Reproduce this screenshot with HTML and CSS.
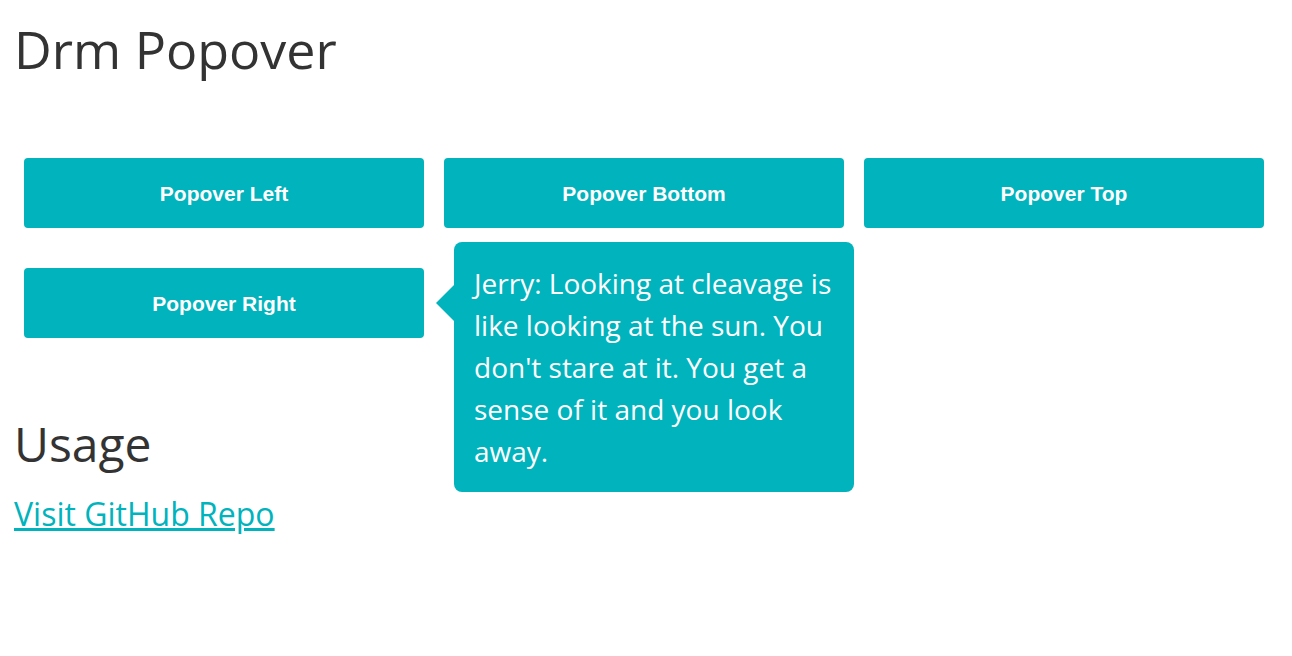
FILE: index.html
```html
<!DOCTYPE html>
<html>
<head>
  <meta charset="UTF-8">
  <title>Drm Popover</title>
  <link rel="stylesheet" href="styles.css">
</head>
<body>
  <div class="page">
    <h1 class="title">Drm Popover</h1>

    <div class="demo">
      <div class="cell">
        <button class="btn">Popover Left</button>
      </div>
      <div class="cell">
        <button class="btn">Popover Bottom</button>
      </div>
      <div class="cell">
        <button class="btn">Popover Top</button>
      </div>
      <div class="cell">
        <button class="btn">Popover Right</button>
        <div class="popover popover-right">
          Jerry: Looking at cleavage is like looking at the sun. You don't stare at it. You get a sense of it and you look away.
        </div>
      </div>
    </div>

    <h2 class="usage">Usage</h2>
    <a class="repo-link" href="#">Visit GitHub Repo</a>
  </div>
</body>
</html>
```

FILE: styles.css
```css
body {
  margin: 0;
  background: #fff;
  color: #333;
  font-family: 'Open Sans', 'Noto Sans', sans-serif;
}

.page {
  padding: 0 14px;
}

.title {
  font-size: 52px;
  font-weight: 400;
  line-height: 62px;
  margin: 18px 0 0 0;
}

.demo {
  display: grid;
  grid-template-columns: repeat(3, 400px);
  column-gap: 20px;
  row-gap: 40px;
  padding: 0 10px;
  margin-top: 78px;
}

.cell {
  position: relative;
}

.btn {
  display: block;
  width: 100%;
  height: 70px;
  padding: 2px 0 0;
  border: none;
  border-radius: 4px;
  background: #00b3bc;
  color: #fff;
  font-family: 'Liberation Sans', Arial, sans-serif;
  font-size: 21px;
  font-weight: 700;
  cursor: pointer;
}

.popover {
  position: absolute;
  left: calc(100% + 30px);
  top: -26px;
  width: 400px;
  box-sizing: border-box;
  padding: 20px 14px 20px 20px;
  border-radius: 8px;
  background: #00b3bc;
  color: #fff;
  font-size: 28px;
  line-height: 42px;
  z-index: 2;
}

.popover-right::before {
  content: "";
  position: absolute;
  left: -18px;
  top: 43px;
  border-top: 18px solid transparent;
  border-bottom: 18px solid transparent;
  border-right: 18px solid #00b3bc;
}

.usage {
  font-size: 48px;
  font-weight: 400;
  line-height: 56px;
  margin: 78px 0 0 0;
}

.repo-link {
  display: inline-block;
  margin-top: 20px;
  font-size: 32px;
  line-height: 44px;
  color: #00b3bc;
  text-decoration: underline;
}
```
